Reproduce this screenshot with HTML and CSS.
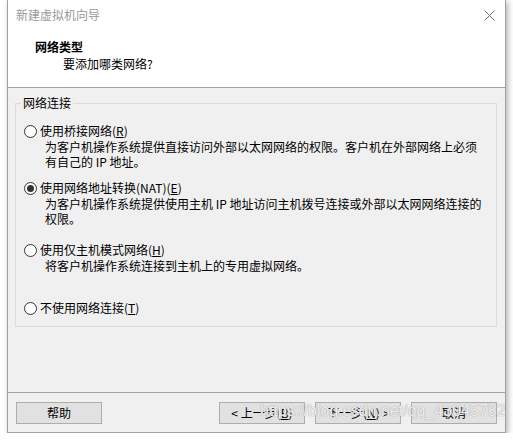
FILE: index.html
```html
<!DOCTYPE html>
<html lang="zh-CN">

<head>
    <meta charset="UTF-8">
    <title>新建虚拟机向导</title>
    <link rel="stylesheet" href="styles.css">
</head>

<body>
    <div class="wizard">
        <!-- 标题栏 -->
        <div class="titlebar">
            <span class="title">新建虚拟机向导</span>
            <svg class="close" width="11" height="11" viewBox="0 0 11 11">
                <path d="M0.5 0.5 L10.5 10.5 M10.5 0.5 L0.5 10.5" stroke="#6f6f6f" stroke-width="1" fill="none" />
            </svg>
        </div>
        <!-- 页头 -->
        <div class="header">
            <div class="h_title">网络类型</div>
            <div class="h_sub">要添加哪类网络?</div>
        </div>
        <!-- 内容 -->
        <div class="content">
            <fieldset class="group">
                <legend>网络连接</legend>
                <div class="opt opt1">
                    <div class="opt_label"><span class="radio"></span>使用桥接网络(<u>R</u>)</div>
                    <div class="opt_desc">为客户机操作系统提供直接访问外部以太网网络的权限。客户机在外部网络上必须<br>有自己的 IP 地址。</div>
                </div>
                <div class="opt opt2">
                    <div class="opt_label"><span class="radio checked"></span>使用网络地址转换(NAT)(<u>E</u>)</div>
                    <div class="opt_desc">为客户机操作系统提供使用主机 IP 地址访问主机拨号连接或外部以太网网络连接的<br>权限。</div>
                </div>
                <div class="opt opt3">
                    <div class="opt_label"><span class="radio"></span>使用仅主机模式网络(<u>H</u>)</div>
                    <div class="opt_desc">将客户机操作系统连接到主机上的专用虚拟网络。</div>
                </div>
                <div class="opt opt4">
                    <div class="opt_label"><span class="radio"></span>不使用网络连接(<u>T</u>)</div>
                </div>
            </fieldset>
        </div>
        <!-- 底部按钮 -->
        <div class="footer">
            <button class="btn">帮助</button>
            <div class="spacer"></div>
            <button class="btn">&lt; 上一步(<u>B</u>)</button>
            <button class="btn">下一步(<u>N</u>) &gt;</button>
            <button class="btn">取消</button>
        </div>
        <!-- 水印 -->
        <div class="watermark">https://blog.csdn.net/qq_43045782</div>
    </div>
</body>

</html>
```

FILE: styles.css
```css
* {
    margin: 0;
    padding: 0;
    box-sizing: border-box;
}

body {
    background: #fff;
    font-family: "Noto Sans CJK SC", "Microsoft YaHei", sans-serif;
    font-size: 12px;
    color: #000;
}

.wizard {
    position: relative;
    width: 499px;
    height: 433px;
    margin-left: 7px;
    border: 1px solid #a0a0a0;
    border-top: none;
    background: #f0f0f0;
    box-shadow: 2px 2px 6px rgba(0, 0, 0, 0.3);
    display: flex;
    flex-direction: column;
}

/*标题栏*/

.titlebar {
    height: 30px;
    background: #fff;
    display: flex;
    align-items: center;
    justify-content: space-between;
    padding: 0 10px 0 8px;
}

.titlebar .title {
    color: #999;
    line-height: 16px;
}

.titlebar .close {
    display: block;
}

/*页头*/

.header {
    height: 58px;
    background: #fff;
    border-bottom: 1px solid #a0a0a0;
    padding: 9px 0 0 27px;
}

.h_title {
    font-weight: bold;
    line-height: 16px;
}

.h_sub {
    line-height: 16px;
    margin: 1px 0 0 28px;
}

/*内容区*/

.content {
    height: 305px;
    border-bottom: 1px solid #a0a0a0;
}

.group {
    margin: 7px 8px 0 7px;
    border: 1px solid #dcdcdc;
    padding: 12px 8px 10px 8px;
}

.group legend {
    line-height: 16px;
    padding: 0 2px;
    margin-left: -3px;
}

.opt_label {
    display: flex;
    align-items: center;
    line-height: 16px;
}

.opt_desc {
    line-height: 15px;
    padding-left: 21px;
}

.opt2 {
    margin-top: 11px;
}

.opt3 {
    margin-top: 16px;
}

.opt4 {
    margin-top: 27px;
}

.radio {
    width: 13px;
    height: 13px;
    margin-right: 3px;
    border: 1px solid #333;
    border-radius: 50%;
    background: #fff;
    display: flex;
    align-items: center;
    justify-content: center;
}

.radio.checked::after {
    content: "";
    width: 7px;
    height: 7px;
    border-radius: 50%;
    background: #333;
}

/*底部按钮*/

.footer {
    flex: 1;
    display: flex;
    gap: 10px;
    padding: 9px 8px 0 8px;
}

.spacer {
    flex: 1;
}

.btn {
    width: 86px;
    height: 22px;
    border: 1px solid #adadad;
    background: #e1e1e1;
    font-family: inherit;
    font-size: 12px;
    line-height: 20px;
    color: #000;
}

/*水印*/

.watermark {
    position: absolute;
    left: 252px;
    top: 402px;
    font-family: "Liberation Sans", Arial, sans-serif;
    font-size: 16px;
    color: rgba(255, 255, 255, 0.8);
    text-shadow: 0 0 1px #aaa, 0 0 1px #aaa;
    white-space: nowrap;
    pointer-events: none;
}
```
